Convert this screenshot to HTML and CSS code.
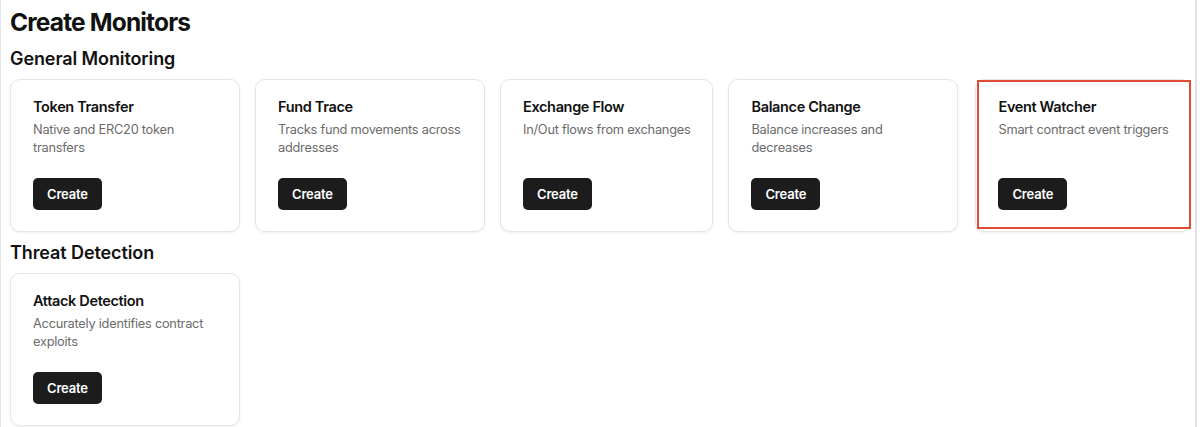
FILE: index.html
```html
<!DOCTYPE html>
<html lang="en">
<head>
<meta charset="utf-8">
<title>Create Monitors</title>
<link rel="stylesheet" href="styles.css">
</head>
<body>
<div class="frame">
  <h1 class="page-title">Create Monitors</h1>

  <h2 class="section-title">General Monitoring</h2>
  <div class="card-row">
    <div class="card">
      <div class="card-title">Token Transfer</div>
      <div class="card-desc">Native and ERC20 token transfers</div>
      <button class="btn">Create</button>
    </div>
    <div class="card">
      <div class="card-title">Fund Trace</div>
      <div class="card-desc">Tracks fund movements across addresses</div>
      <button class="btn">Create</button>
    </div>
    <div class="card">
      <div class="card-title">Exchange Flow</div>
      <div class="card-desc">In/Out flows from exchanges</div>
      <button class="btn">Create</button>
    </div>
    <div class="card">
      <div class="card-title">Balance Change</div>
      <div class="card-desc">Balance increases and decreases</div>
      <button class="btn">Create</button>
    </div>
    <div class="card card-highlight">
      <div class="card-title">Event Watcher</div>
      <div class="card-desc">Smart contract event triggers</div>
      <button class="btn">Create</button>
      <div class="highlight-box"></div>
    </div>
  </div>

  <h2 class="section-title section-title-2">Threat Detection</h2>
  <div class="card-row">
    <div class="card">
      <div class="card-title">Attack Detection</div>
      <div class="card-desc">Accurately identifies contract exploits</div>
      <button class="btn">Create</button>
    </div>
  </div>
</div>
</body>
</html>
```

FILE: styles.css
```css
* { box-sizing: border-box; }

html, body {
  margin: 0;
  padding: 0;
  background: #ffffff;
}

body {
  font-family: Inter, "Noto Sans", "Liberation Sans", sans-serif;
  color: #111111;
}

.frame {
  width: 1197px;
  height: 427px;
  border-left: 1px solid #e2e2e2;
  border-right: 2px solid #e2e2e2;
  padding: 6px 7px 0 9px;
  overflow: hidden;
}

.page-title {
  margin: 0;
  font-size: 24.5px;
  line-height: 32px;
  font-weight: 700;
  letter-spacing: -0.85px;
  color: #111;
}

.section-title {
  margin: 9px 0 8px 0;
  font-size: 18px;
  line-height: 24px;
  font-weight: 600;
  letter-spacing: -0.1px;
  color: #111;
}

.section-title-2 {
  margin-top: 9px;
}

.card-row {
  display: flex;
  gap: 15px;
  align-items: stretch;
}

.card {
  position: relative;
  display: flex;
  flex-direction: column;
  align-items: flex-start;
  max-width: 230px;
  flex: 0 0 auto;
  padding: 17px 22px 21px 22px;
  border: 1px solid #e6e6e6;
  border-radius: 10px;
  background: #fff;
  box-shadow: 0 1px 3px rgba(0, 0, 0, 0.07);
}

.card-highlight {
  margin-left: 2px;
}

.card-title {
  font-size: 14.5px;
  line-height: 20px;
  font-weight: 600;
  letter-spacing: -0.35px;
  color: #111;
}

.card-desc {
  margin-top: 4px;
  margin-bottom: 21px;
  font-size: 12.8px;
  line-height: 18px;
  letter-spacing: -0.25px;
  color: #6b6b6b;
}

.btn {
  margin-top: auto;
  height: 32px;
  padding: 0 14px;
  border: none;
  border-radius: 5px;
  background: #1c1c1c;
  color: #fff;
  font-family: inherit;
  font-size: 13px;
  font-weight: 600;
  letter-spacing: -0.2px;
}

.highlight-box {
  position: absolute;
  top: 0;
  left: 1px;
  right: -1px;
  bottom: 2px;
  border: 2px solid #e04b35;
  pointer-events: none;
}
```
